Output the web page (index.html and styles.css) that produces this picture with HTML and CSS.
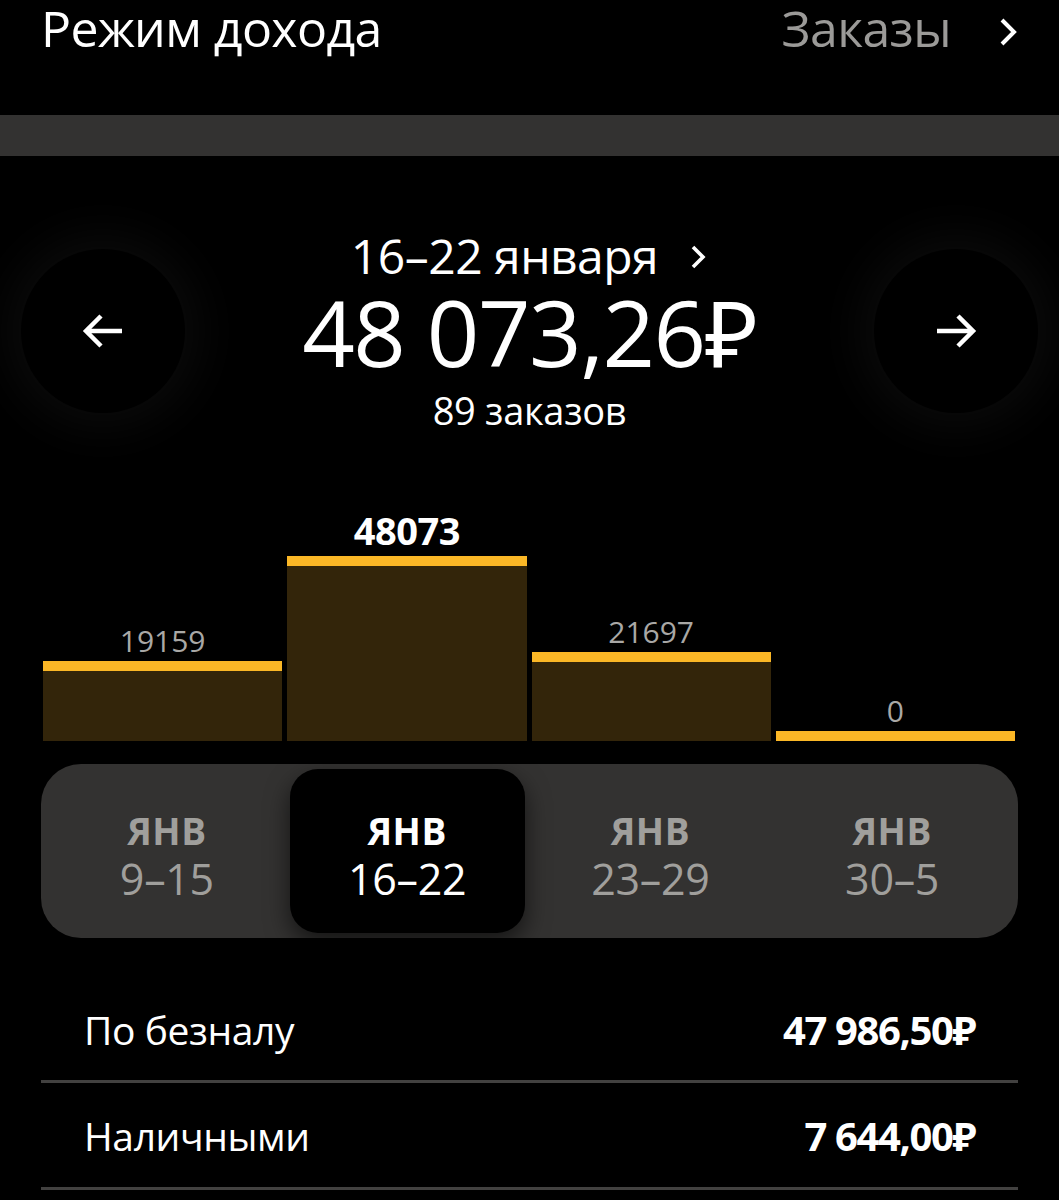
FILE: index.html
```html
<!DOCTYPE html>
<html lang="ru">
<head>
<meta charset="utf-8">
<link rel="stylesheet" href="styles.css">
</head>
<body>
<div class="page">
  <header class="top">
    <div class="title">Режим дохода</div>
    <div class="orders">
      <span class="orders-text">Заказы</span>
      <svg class="chev-top" width="22" height="32" viewBox="0 0 22 32"><path d="M5 4 L17 16 L5 28" fill="none" stroke="#fff" stroke-width="4"/></svg>
    </div>
  </header>
  <div class="band"></div>

  <section class="hero">
    <div class="circle">
      <svg width="46" height="46" viewBox="0 0 46 46"><path d="M42 23 H6 M21 8 L6 23 L21 38" fill="none" stroke="#fff" stroke-width="4.5"/></svg>
    </div>
    <div class="hero-center">
      <div class="period">16–22 января
        <svg class="chev-mid" width="20" height="30" viewBox="0 0 20 30"><path d="M5 5 L15 15 L5 25" fill="none" stroke="#fff" stroke-width="3.6"/></svg>
      </div>
      <div class="amount">48 073,26₽</div>
      <div class="count">89 заказов</div>
    </div>
    <div class="circle">
      <svg width="46" height="46" viewBox="0 0 46 46"><path d="M4 23 H40 M25 8 L40 23 L25 38" fill="none" stroke="#fff" stroke-width="4.5"/></svg>
    </div>
  </section>

  <section class="chart">
    <div class="col">
      <div class="val">19159</div>
      <div class="bar" style="height:80px"></div>
    </div>
    <div class="col">
      <div class="val val-active">48073</div>
      <div class="bar" style="height:185px"></div>
    </div>
    <div class="col">
      <div class="val">21697</div>
      <div class="bar" style="height:89px"></div>
    </div>
    <div class="col">
      <div class="val">0</div>
      <div class="bar" style="height:10px"></div>
    </div>
  </section>

  <section class="weeks">
    <div class="week"><div class="m">ЯНВ</div><div class="d">9–15</div></div>
    <div class="week active"><div class="m">ЯНВ</div><div class="d">16–22</div></div>
    <div class="week"><div class="m">ЯНВ</div><div class="d">23–29</div></div>
    <div class="week"><div class="m">ЯНВ</div><div class="d">30–5</div></div>
  </section>

  <section class="rows">
    <div class="row"><span class="label">По безналу</span><span class="sum">47 986,50₽</span></div>
    <div class="row"><span class="label">Наличными</span><span class="sum">7 644,00₽</span></div>
  </section>
</div>
</body>
</html>
```
FILE: styles.css
```css
* { box-sizing: border-box; }
html, body { margin: 0; padding: 0; background: #000; }
body {
  font-family: "Open Sans", "Noto Sans", sans-serif;
  color: #fff;
  width: 1059px;
  overflow: hidden;
}
.page { width: 1059px; height: 1200px; overflow: hidden; }

.top {
  height: 115px;
  display: flex;
  justify-content: space-between;
  align-items: flex-start;
  padding: 0 40px 0 41px;
}
.title {
  font-size: 50px;
  line-height: 56px;
  letter-spacing: -0.6px;
}
.orders { display: flex; align-items: flex-start; }
.orders-text {
  color: #9b9a98;
  font-size: 50px;
  line-height: 56px;
  letter-spacing: -0.6px;
  margin-right: 46px;
}
.chev-top { display: block; margin-top: 16px; }

.band { height: 41px; background: #333231; }

.hero {
  display: flex;
  align-items: flex-start;
  padding: 0 21px;
  height: 290px;
}
.circle {
  width: 164px;
  height: 164px;
  border-radius: 50%;
  background: #000;
  box-shadow: 0 0 50px 14px rgba(255,255,255,0.045);
  display: flex;
  align-items: center;
  justify-content: center;
  flex: none;
  margin-top: 93px;
}
.hero-center {
  flex: 1;
  text-align: center;
  padding-top: 74px;
}
.period {
  font-size: 48px;
  line-height: 52px;
  letter-spacing: -0.5px;
  display: flex;
  align-items: center;
  justify-content: center;
}
.chev-mid { margin-left: 30px; margin-top: 2px; }
.amount {
  font-size: 92px;
  line-height: 92px;
  letter-spacing: -1.5px;
  margin-top: 4px;
}
.count {
  font-size: 38px;
  line-height: 40px;
  margin-top: 12px;
  letter-spacing: -0.3px;
}

.chart {
  display: flex;
  align-items: flex-end;
  gap: 5px;
  margin: 0 44px 0 43px;
  height: 295px;
}
.col {
  flex: 1;
  display: flex;
  flex-direction: column;
  justify-content: flex-end;
  align-items: stretch;
}
.val {
  text-align: center;
  color: #a9a8a6;
  font-size: 30px;
  line-height: 34px;
  margin-bottom: 3px;
}
.val-active {
  color: #fff;
  font-weight: 700;
  font-size: 38px;
  line-height: 44px;
  margin-bottom: 4px;
  letter-spacing: -0.5px;
}
.bar {
  background: #33250a;
  border-top: 10px solid #fbb726;
}

.weeks {
  margin: 23px 41px 0 41px;
  height: 174px;
  border-radius: 40px;
  background: #333231;
  padding: 5px;
  display: grid;
  grid-template-columns: repeat(4, 1fr);
  gap: 0;
}
.week {
  display: flex;
  flex-direction: column;
  align-items: center;
  justify-content: center;
  color: #a09f9c;
  border-radius: 28px;
  padding-top: 10px;
}
.week:nth-child(2) { margin: 0 5px 0 2px; }
.week.active {
  background: #000;
  color: #fff;
  box-shadow: 0 10px 24px rgba(0,0,0,0.6);
}
.m {
  font-size: 37px;
  font-weight: 700;
  line-height: 40px;
  letter-spacing: 0.5px;
}
.d {
  font-size: 43px;
  line-height: 46px;
  letter-spacing: -0.3px;
  margin-top: 5px;
}

.rows { margin: 40px 41px 0 41px; }
.row {
  display: flex;
  justify-content: space-between;
  align-items: center;
  height: 107px;
  padding: 0 43px;
  border-bottom: 3px solid #424140;
}
.row:first-child { height: 105px; }
.label { font-size: 39px; letter-spacing: -0.4px; }
.sum { font-size: 40px; font-weight: 700; letter-spacing: -1.4px; }
```
